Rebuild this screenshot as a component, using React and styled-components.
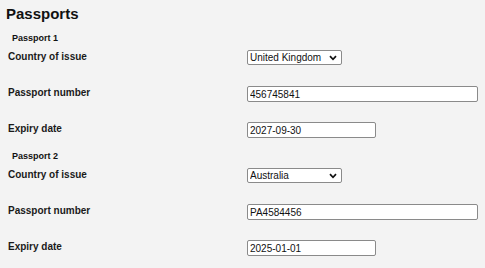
import React from "react";
import styled, { createGlobalStyle } from "styled-components";

const Global = createGlobalStyle`
  html, body { margin: 0; padding: 0; background: #f3f3f3; }
  body { font-family: "Liberation Sans", Arial, sans-serif; color: #1a1a1a; }
`;

const Page = styled.div`
  padding: 5px 7px 0 6px;
  width: 485px;
  box-sizing: border-box;
`;

const Title = styled.h1`
  margin: 0 0 10px 0;
  font-size: 15px;
  line-height: 18px;
  font-weight: bold;
  color: #111;
`;

const Section = styled.section`
  display: flex;
  flex-direction: column;
`;

const Legend = styled.div`
  font-size: 9px;
  line-height: 11px;
  font-weight: bold;
  padding-left: 6px;
  margin-bottom: 5px;
  color: #111;
`;

const Rows = styled.div`
  display: flex;
  flex-direction: column;
  gap: 6px;
`;

const Row = styled.div`
  display: grid;
  grid-template-columns: 239px 1fr;
  align-items: start;
  min-height: 30px;
`;

const Label = styled.label`
  font-size: 10px;
  line-height: 12px;
  font-weight: bold;
  padding: 2px 0 0 2px;
  color: #1a1a1a;
`;

const TextInput = styled.input`
  display: block;
  box-sizing: border-box;
  margin: 1px 0 0 2px;
  width: ${(p) => p.$w}px;
  height: 16px;
  padding: 0 2px;
  border: 1px solid #8a8a8a;
  border-radius: 2px;
  background: #fff;
  font-family: "Liberation Sans", Arial, sans-serif;
  font-size: 10px;
  color: #111;
  outline: none;
`;

const SelectWrap = styled.div`
  position: relative;
  margin: 1px 0 0 2px;
  width: 95px;
  height: 15px;
  line-height: 0;
`;

const Select = styled.select`
  display: block;
  appearance: none;
  box-sizing: border-box;
  width: 100%;
  height: 100%;
  margin: 0;
  padding: 0 14px 0 2px;
  border: 1px solid #8a8a8a;
  border-radius: 2px;
  background: #fff;
  font-family: "Liberation Sans", Arial, sans-serif;
  font-size: 10px;
  line-height: 13px;
  color: #111;
  outline: none;
`;

const Chevron = styled.svg`
  position: absolute;
  right: 5px;
  top: 5px;
  width: 8px;
  height: 6px;
  pointer-events: none;
`;

const passports = [
  { name: "Passport 1", country: "United Kingdom", number: "456745841", expiry: "2027-09-30" },
  { name: "Passport 2", country: "Australia", number: "PA4584456", expiry: "2025-01-01" },
];

const countries = ["United Kingdom", "Australia", "Canada", "France", "Germany"];

function CountrySelect({ value }) {
  return (
    <SelectWrap>
      <Select defaultValue={value}>
        {countries.map((c) => (
          <option key={c} value={c}>{c}</option>
        ))}
      </Select>
      <Chevron viewBox="0 0 8 6">
        <path d="M1 1.2 L4 4.3 L7 1.2" fill="none" stroke="#111" strokeWidth="1.7" />
      </Chevron>
    </SelectWrap>
  );
}

export default function App() {
  return (
    <>
      <Global />
      <Page>
        <Title>Passports</Title>
        {passports.map((p) => (
          <Section key={p.name}>
            <Legend>{p.name}</Legend>
            <Rows>
              <Row>
                <Label>Country of issue</Label>
                <CountrySelect value={p.country} />
              </Row>
              <Row>
                <Label>Passport number</Label>
                <TextInput $w={231} defaultValue={p.number} />
              </Row>
              <Row>
                <Label>Expiry date</Label>
                <TextInput $w={129} defaultValue={p.expiry} />
              </Row>
            </Rows>
          </Section>
        ))}
      </Page>
    </>
  );
}
